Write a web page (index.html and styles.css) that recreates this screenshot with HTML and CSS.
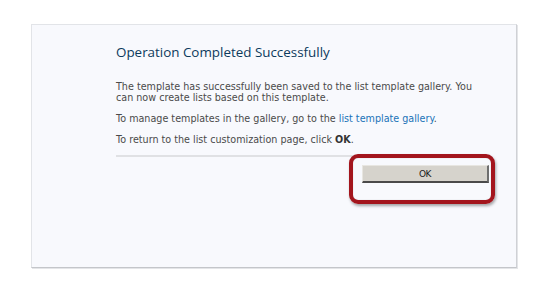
FILE: index.html
```html
<!DOCTYPE html>
<html>
<head>
<meta charset="utf-8">
<link rel="stylesheet" href="styles.css">
</head>
<body>
<div class="panel">
  <div class="content">
    <h1 class="title">Operation Completed Successfully</h1>
    <p class="text">The template has successfully been saved to the list template gallery. You can now create lists based on this template.</p>
    <p class="text">To manage templates in the gallery, go to the <a class="link" href="#">list template gallery</a>.</p>
    <p class="text">To return to the list customization page, click <b>OK</b>.</p>
    <div class="sep"></div>
    <div class="actions">
      <button class="ok">OK</button>
      <div class="highlight"></div>
    </div>
  </div>
</div>
</body>
</html>
```
FILE: styles.css
```css
html, body {
  margin: 0;
  padding: 0;
  background: #ffffff;
}
body {
  width: 540px;
  height: 290px;
  overflow: hidden;
  padding-top: 24px;
  padding-left: 31px;
  box-sizing: border-box;
}
.panel {
  width: 486px;
  height: 244px;
  box-sizing: border-box;
  background: #f8f9fd;
  border: 1px solid #e2e4e8;
  border-right-color: #cfd1d5;
  border-bottom-color: #c4c6ca;
  box-shadow: 1px 1px 0 #e4e5e8;
}
.content {
  margin-left: 84px;
  width: 373px;
  padding-top: 18px;
}
.title {
  margin: 0 0 20px 0;
  font-family: "Open Sans", "DejaVu Sans", sans-serif;
  font-weight: normal;
  font-size: 13.4px;
  line-height: 18px;
  color: #0c3a5c;
}
.text {
  margin: 0 0 10px 0;
  max-width: 364px;
  font-family: "DejaVu Sans", Verdana, sans-serif;
  font-size: 9.6px;
  line-height: 11px;
  color: #4a4a4a;
}
.text b {
  color: #333;
}
.link {
  color: #1a73b8;
  text-decoration: none;
}
.sep {
  height: 2px;
  background: #e0e1e4;
  margin-top: 1px;
}
.actions {
  position: relative;
  display: flex;
  justify-content: flex-end;
  padding-top: 8px;
}
.ok {
  width: 127px;
  height: 18px;
  margin: 0;
  padding: 0;
  background: #d6d3cc;
  border: 1px solid #d6d3cc;
  border-right: 2px solid #6e6e6e;
  border-bottom: 2px solid #4a4a4a;
  border-top-color: #e8e6e1;
  border-left-color: #e8e6e1;
  font-family: "DejaVu Sans", Verdana, sans-serif;
  font-size: 9px;
  color: #1a1a1a;
  letter-spacing: -0.4px;
}
.highlight {
  position: absolute;
  left: 233px;
  top: -3px;
  width: 146px;
  height: 50px;
  box-sizing: border-box;
  border: 4px solid #a3151d;
  border-radius: 9px;
  box-shadow: 1px 2px 3px rgba(0,0,0,0.35), inset 0 0 1px rgba(0,0,0,0.3);
}
```
